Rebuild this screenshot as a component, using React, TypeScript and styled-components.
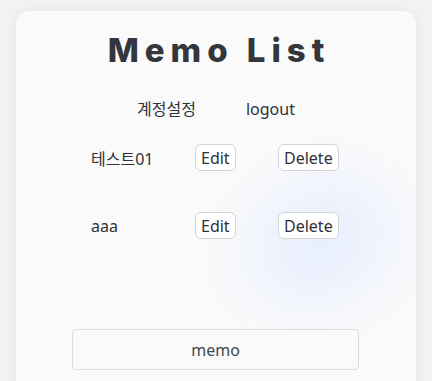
import styled, { createGlobalStyle } from 'styled-components';

type Memo = { id: number; title: string };

const memos: Memo[] = [
  { id: 1, title: '테스트01' },
  { id: 2, title: 'aaa' },
];

export default function App() {
  return (
    <>
      <GlobalStyle />
      <StyledPage>
        <StyledCard>
          <StyledGlow />
          <StyledTitle>Memo List</StyledTitle>
          <StyledNav>
            <StyledNavLink>계정설정</StyledNavLink>
            <StyledNavLink>logout</StyledNavLink>
          </StyledNav>
          <StyledList>
            {memos.map((memo) => (
              <StyledRow key={memo.id}>
                <StyledLabel>{memo.title}</StyledLabel>
                <StyledButton>Edit</StyledButton>
                <StyledButton>Delete</StyledButton>
              </StyledRow>
            ))}
          </StyledList>
          <StyledMemoBox>memo</StyledMemoBox>
        </StyledCard>
      </StyledPage>
    </>
  );
}

const GlobalStyle = createGlobalStyle`
  html, body {
    margin: 0;
    padding: 0;
    background-color: #f2f3f0;
    font-family: "Noto Sans", "Noto Sans CJK KR", sans-serif;
    color: #2f3236;
  }
`;

const StyledPage = styled.div`
  width: 432px;
  height: 381px;
  overflow: hidden;
  padding: 11px 16px 0;
  box-sizing: border-box;
`;

const StyledCard = styled.div`
  position: relative;
  width: 400px;
  height: 420px;
  background-color: #fafafa;
  border-radius: 12px;
  box-shadow: 0 0 12px rgba(0, 0, 0, 0.05);
  display: flex;
  flex-direction: column;
  align-items: center;
  overflow: hidden;
`;

const StyledGlow = styled.div`
  position: absolute;
  left: 185px;
  top: 135px;
  width: 220px;
  height: 200px;
  border-radius: 50%;
  background: radial-gradient(ellipse at 55% 50%, rgba(226, 234, 255, 0.85) 0%, rgba(234, 240, 255, 0.55) 40%, rgba(250, 250, 250, 0) 70%);
  filter: blur(14px);
  transform: rotate(-25deg);
  pointer-events: none;
`;

const StyledTitle = styled.h1`
  position: relative;
  margin: 19px 0 0 6px;
  font-family: Inter, "Noto Sans", sans-serif;
  font-size: 33px;
  font-weight: 800;
  letter-spacing: 6px;
  line-height: 40px;
  color: #33373d;
`;

const StyledNav = styled.div`
  position: relative;
  display: flex;
  gap: 50px;
  margin-top: 28px;
  font-size: 16px;
  line-height: 22px;
`;

const StyledNavLink = styled.span`
  color: #2f3236;
`;

const StyledList = styled.ul`
  position: relative;
  align-self: flex-start;
  margin: 24px 0 0 75px;
  padding: 0;
  list-style-type: none;
  display: flex;
  flex-direction: column;
  gap: 41px;
`;

const StyledRow = styled.li`
  display: grid;
  grid-template-columns: 104px 83px auto;
  align-items: center;
  height: 27px;
`;

const StyledLabel = styled.span`
  font-size: 16px;
  color: #2f3236;
`;

const StyledButton = styled.button`
  justify-self: start;
  height: 27px;
  padding: 0 5px;
  font-family: "Noto Sans", "Noto Sans CJK KR", sans-serif;
  font-size: 16px;
  color: #2f3236;
  background-color: #ffffff;
  border: 1px solid #d4d4d4;
  border-radius: 6px;
`;

const StyledMemoBox = styled.div`
  position: relative;
  margin: 90px 0 0 -1px;
  width: 287px;
  height: 41px;
  box-sizing: border-box;
  display: flex;
  align-items: center;
  justify-content: center;
  font-size: 16px;
  color: #44474c;
  background-color: #fafaf9;
  border: 1px solid #dcdcdf;
  border-radius: 4px;
`;
